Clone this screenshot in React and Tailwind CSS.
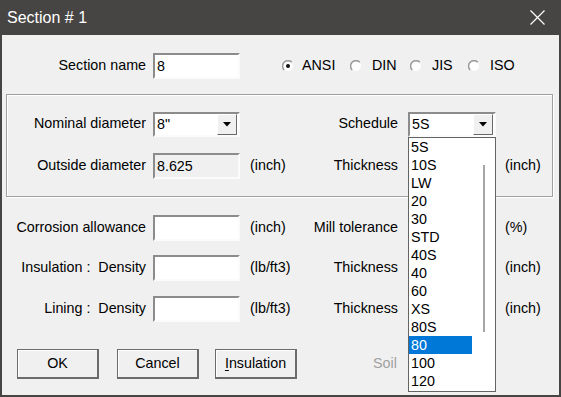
import React from "react";

const sunken =
  "border-2 border-t-[#8c8c8c] border-l-[#8c8c8c] border-r-[#fbfbfb] border-b-[#fbfbfb]";

const scheduleItems = ["5S", "10S", "LW", "20", "30", "STD", "40S", "40", "60", "XS", "80S", "80", "100", "120"];

const Field = ({ value = "", gray = false }) => (
  <div
    className={`h-[26px] w-[87px] ${sunken} ${gray ? "bg-[#f0f0f0]" : "bg-white"} flex items-center pl-[2px] leading-none`}
  >
    {value}
  </div>
);

const Arrow = () => (
  <svg width="8" height="5" viewBox="0 0 8 5">
    <path d="M0 0 H8 L4 4.5 Z" fill="#000" />
  </svg>
);

const Combo = ({ value, wide = false }) => (
  <div
    className={`h-[25px] ${wide ? "w-[88px]" : "w-[87px]"} ${sunken} bg-white flex items-center justify-between pl-[2px] pr-[1px]`}
  >
    <span className="leading-none">{value}</span>
    <div className="h-[21px] w-[20px] flex items-center justify-center bg-[#f0f0f0] border border-t-[#ffffff] border-l-[#ffffff] border-r-[#696969] border-b-[#696969]">
      <Arrow />
    </div>
  </div>
);

const Radio = ({ label, checked, width }) => (
  <div className={`flex items-center ${width}`}>
    <svg width="12" height="12" viewBox="0 0 12 12">
      <circle cx="6" cy="6" r="5" fill="#fff" />
      <path d="M2.2 10 A5.2 5.2 0 0 1 9.8 2.2" stroke="#9a9a9a" strokeWidth="1.5" fill="none" />
      {checked && <circle cx="6" cy="6" r="2" fill="#111" />}
    </svg>
    <span className={checked ? "ml-[8px]" : "ml-[10px]"}>{label}</span>
  </div>
);

const Row = ({ label, inset, control, unit, rlabel, rcontrol, runit, className = "" }) => (
  <div className={`flex items-center h-[26px] ${className}`}>
    <div className={`${inset ? "w-[138px]" : "w-[144px]"} text-right whitespace-pre shrink-0`}>{label}</div>
    <div className="ml-[7px]">{control}</div>
    <div className="ml-[10px] w-[50px] shrink-0">{unit}</div>
    <div className="w-[98px] text-right shrink-0">{rlabel}</div>
    <div className="ml-[10px]">{rcontrol}</div>
    <div className="ml-[9px]">{runit}</div>
  </div>
);

const Button = ({ children }) => (
  <div className="h-[30px] w-[82px] flex items-center justify-center bg-[#f0f0f0] border border-[#6b6b6b] border-b-2 border-r-2 shadow-[inset_1px_1px_0_#ffffff]">
    {children}
  </div>
);

const App = () => {
  return (
    <div className="w-[561px] h-[397px] bg-[#474543] flex flex-col font-['Liberation_Sans',Arial,sans-serif] text-[14.3px] text-black overflow-hidden">
      <div className="h-[35px] flex items-center justify-between pl-[7px] pr-[16px] shrink-0">
        <span className="text-white text-[16px]">Section # 1</span>
        <svg width="15" height="15" viewBox="0 0 15 15">
          <path d="M0.5 0.5 L14.5 14.5 M14.5 0.5 L0.5 14.5" stroke="#fff" strokeWidth="1.2" />
        </svg>
      </div>
      <div className="relative mx-[2px] mb-[2px] h-[360px] bg-[#f0f0f0]">
        <div className="flex items-center h-[26px] mt-[18px]">
          <div className="w-[144px] text-right">Section name</div>
          <div className="ml-[7px]">
            <Field value="8" />
          </div>
          <div className="ml-[42px] flex items-center">
            <Radio label="ANSI" checked width="w-[68px]" />
            <Radio label="DIN" width="w-[60px]" />
            <Radio label="JIS" width="w-[58px]" />
            <Radio label="ISO" width="w-[50px]" />
          </div>
        </div>

        <div className="ml-[4px] mt-[15px] w-[547px] border border-[#a0a0a0] shadow-[inset_1px_1px_0_#ffffff,1px_1px_0_#ffffff] pt-[16px] pb-[17px] pl-[1px]">
          <Row
            inset
            label="Nominal diameter"
            control={<Combo value={'8"'} />}
            rlabel="Schedule"
            rcontrol={<Combo value="5S" wide />}
            className="h-[25px]"
          />
          <Row
            inset
            label="Outside diameter"
            control={<Field value="8.625" gray />}
            unit="(inch)"
            rlabel="Thickness"
            rcontrol={<div className={`h-[26px] w-[88px] ${sunken} bg-[#f0f0f0]`} />}
            runit="(inch)"
            className="mt-[16px]"
          />
        </div>

        <Row
          label="Corrosion allowance"
          control={<Field />}
          unit="(inch)"
          rlabel="Mill tolerance"
          rcontrol={<div className={`h-[26px] w-[88px] ${sunken} bg-white`} />}
          runit="(%)"
          className="mt-[18px]"
        />
        <Row
          label={"Insulation :  Density"}
          control={<Field />}
          unit="(lb/ft3)"
          rlabel="Thickness"
          rcontrol={<div className={`h-[26px] w-[88px] ${sunken} bg-white`} />}
          runit="(inch)"
          className="mt-[14px]"
        />
        <Row
          label={"Lining :  Density"}
          control={<Field />}
          unit="(lb/ft3)"
          rlabel="Thickness"
          rcontrol={<div className={`h-[26px] w-[88px] ${sunken} bg-white`} />}
          runit="(inch)"
          className="mt-[15px]"
        />

        <div className="flex items-center mt-[27px] h-[30px]">
          <div className="ml-[15px]">
            <Button>OK</Button>
          </div>
          <div className="ml-[18px]">
            <Button>Cancel</Button>
          </div>
          <div className="ml-[16px]">
            <Button>
              <span>
                <span className="underline underline-offset-2">I</span>nsulation
              </span>
            </Button>
          </div>
          <div className="ml-[76px] text-[#a0a0a0]">Soil</div>
        </div>

        <div className="absolute left-[406px] top-[102px] w-[88px] h-[255px] bg-white border border-[#646464] flex">
          <div className="w-[63px] flex flex-col">
            {scheduleItems.map((item) => (
              <div
                key={item}
                className={`h-[18px] leading-[18px] pl-[2px] ${item === "80" ? "bg-[#0078d7] text-white" : ""}`}
              >
                {item}
              </div>
            ))}
          </div>
          <div className="flex-1 flex justify-center pt-[27px]">
            <div className="w-[2px] h-[167px] bg-[#a6a6a6]" />
          </div>
        </div>
      </div>
    </div>
  );
};

export default App;
